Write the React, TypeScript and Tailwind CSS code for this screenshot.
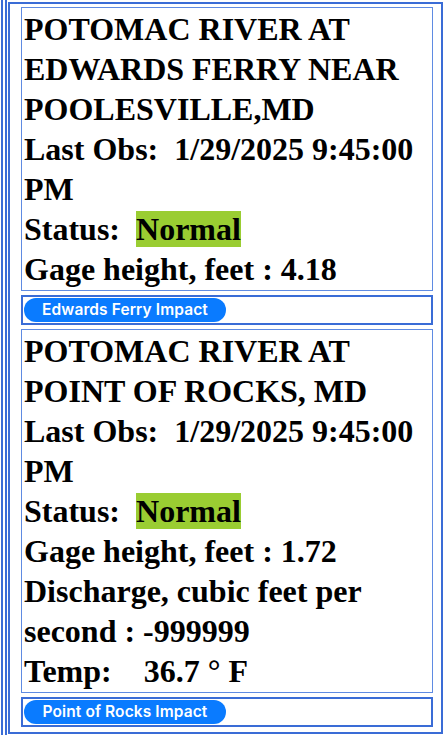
import React from "react";

type Gage = {
  id: string;
  title: string;
  obs: string;
  lines: string[];
  link: string;
};

const gages: Gage[] = [
  {
    id: "edwards",
    title: "POTOMAC RIVER AT EDWARDS FERRY NEAR POOLESVILLE,MD",
    obs: "1/29/2025 9:45:00 PM",
    lines: ["Gage height, feet : 4.18"],
    link: "Edwards Ferry Impact",
  },
  {
    id: "rocks",
    title: "POTOMAC RIVER AT POINT OF ROCKS, MD",
    obs: "1/29/2025 9:45:00 PM",
    lines: [
      "Gage height, feet : 1.72",
      "Discharge, cubic feet per second : -999999",
      "Temp:\u00a0\u00a0\u00a0 36.7 \u00b0 F",
    ],
    link: "Point of Rocks Impact",
  },
];

function GageCell({ gage }: { gage: Gage }) {
  return (
    <>
      <div className="border border-[#5f8be2] p-[1px] pl-[2px] font-['Liberation_Serif',serif] text-[32px] font-bold leading-[40px] text-black">
        <div>{gage.title}</div>
        <div>{`Last Obs:\u00a0\u00a0${gage.obs}`}</div>
        <div>
          Status:{"\u00a0 "}
          <span className="bg-[#9acd32]">Normal</span>
        </div>
        {gage.lines.map((l) => (
          <div key={l}>{l}</div>
        ))}
      </div>
      <div className="border-2 border-[#3a6cd6] p-[1px]">
        <button className="flex h-[24px] w-[202px] items-center justify-center rounded-full bg-[#0a7bff] font-['Inter',sans-serif] text-[15.5px] font-semibold tracking-[0.1px] text-white">
          {gage.link}
        </button>
      </div>
    </>
  );
}

export default function App() {
  return (
    <div className="h-[750px] w-[447px] overflow-hidden bg-white">
      <div className="flex h-[735px]">
        <div className="w-[3px] border-r-2 border-[#3a6cd6]" />
        <div className="ml-[2px] w-[2px] bg-[#3a6cd6]" />
        <div className="ml-[1px] mt-[2px] mb-[1px] w-[435px] border-2 border-[#3a6cd6] pt-[3px] pb-[3px] pl-[11px] pr-[8px]">
          <div className="flex flex-col gap-[4px]">
            {gages.map((g) => (
              <GageCell key={g.id} gage={g} />
            ))}
          </div>
        </div>
      </div>
    </div>
  );
}
